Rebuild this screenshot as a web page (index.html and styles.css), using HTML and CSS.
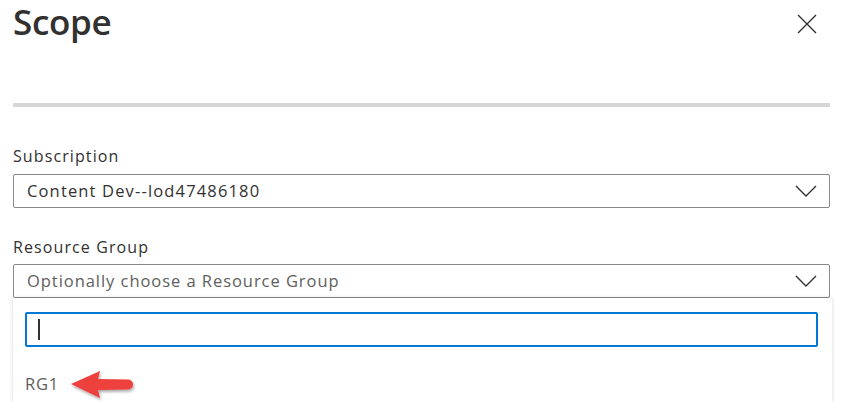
FILE: index.html
```html
<!DOCTYPE html>
<html lang="en">
<head>
<meta charset="utf-8">
<title>Scope</title>
<link rel="stylesheet" href="styles.css">
</head>
<body>
<div class="pane">
  <header class="head">
    <h1 class="title">Scope</h1>
    <button class="close" aria-label="Close">
      <svg width="20" height="20" viewBox="0 0 20 20"><path d="M1 1L19 19M19 1L1 19" stroke="#323130" stroke-width="1.4" fill="none"/></svg>
    </button>
  </header>
  <div class="divider"></div>

  <div class="field sub">
    <div class="label">Subscription</div>
    <div class="select">
      <span class="value">Content Dev--lod47486180</span>
      <svg class="chev" width="22" height="12" viewBox="0 0 22 12"><path d="M1 1L11 11L21 1" stroke="#323130" stroke-width="1.4" fill="none"/></svg>
    </div>
  </div>

  <div class="field rg">
    <div class="label">Resource Group</div>
    <div class="select">
      <span class="placeholder">Optionally choose a Resource Group</span>
      <svg class="chev" width="22" height="12" viewBox="0 0 22 12"><path d="M1 1L11 11L21 1" stroke="#323130" stroke-width="1.4" fill="none"/></svg>
    </div>
    <div class="panel">
      <div class="search"><span class="caret"></span></div>
      <div class="option">
        <span>RG1</span>
        <svg class="arrow" width="70" height="36" viewBox="0 0 70 36">
          <defs>
            <filter id="sh" x="-20%" y="-30%" width="140%" height="170%">
              <feDropShadow dx="1" dy="2" stdDeviation="1.5" flood-color="#000" flood-opacity="0.35"/>
            </filter>
          </defs>
          <path d="M3 16L32 3L30 11L60 11.5A5 5 0 0 1 60 21.5L30 22L32 30Z" fill="#ee3f3d" filter="url(#sh)"/>
        </svg>
      </div>
    </div>
  </div>
</div>
</body>
</html>
```

FILE: styles.css
```css
html, body {
  margin: 0;
  padding: 0;
  background: #ffffff;
}
body {
  width: 844px;
  height: 402px;
  overflow: hidden;
  font-family: "Open Sans", "Noto Sans", sans-serif;
  color: #323130;
}
.pane {
  padding: 0 14px 0 13px;
  height: 402px;
  box-sizing: border-box;
  overflow: hidden;
}
.head {
  display: flex;
  justify-content: space-between;
  align-items: flex-start;
}
.title {
  margin: 0;
  font-size: 35px;
  line-height: 44px;
  font-weight: 600;
  letter-spacing: -0.3px;
  color: #323130;
}
.close {
  margin: 14px 13px 0 0;
  padding: 0;
  border: 0;
  background: none;
  width: 20px;
  height: 20px;
  display: flex;
}
.divider {
  margin-top: 59px;
  height: 4px;
  background: #d6d6d6;
}
.label {
  font-size: 16px;
  line-height: 20px;
  letter-spacing: 1.1px;
  color: #323130;
}
.sub {
  margin-top: 39px;
}
.rg {
  margin-top: 29px;
}
.select {
  margin-top: 8px;
  height: 34px;
  box-sizing: border-box;
  border: 1px solid #8a8886;
  border-radius: 2px;
  display: flex;
  align-items: center;
  justify-content: space-between;
  padding: 0 12px 0 13px;
  font-size: 16.5px;
  line-height: 20px;
  letter-spacing: 0.95px;
}
.rg .select {
  margin-top: 7px;
}
.value {
  color: #323130;
  letter-spacing: 1.15px;
}
.placeholder {
  color: #605e5c;
}
.chev {
  display: block;
}
.panel {
  margin-right: -2px;
  height: 104px;
  box-sizing: border-box;
  box-shadow: 0 0 4px rgba(0, 0, 0, 0.16);
  padding: 14px 14px 0 12px;
  background: #ffffff;
}
.search {
  height: 35px;
  box-sizing: border-box;
  border: 2px solid #0078d4;
  border-radius: 2px;
  display: flex;
  align-items: center;
  padding-left: 11px;
}
.caret {
  display: block;
  width: 1.5px;
  height: 21px;
  background: #323130;
}
.option {
  position: relative;
  margin-top: 27px;
  font-size: 16.5px;
  line-height: 20px;
  letter-spacing: 0.8px;
  color: #605e5c;
}
.arrow {
  position: absolute;
  left: 43px;
  top: -6px;
}
```
